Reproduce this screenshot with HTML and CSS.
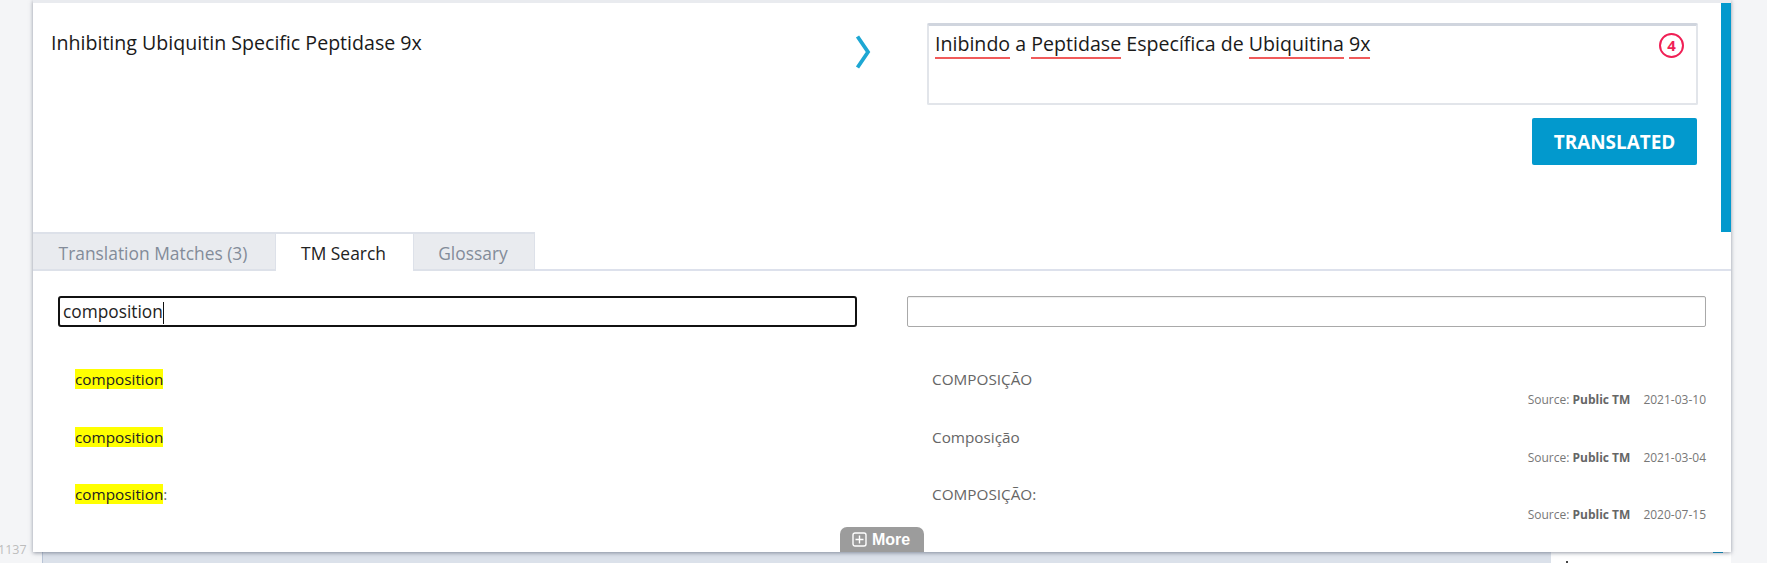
FILE: index.html
```html
<!DOCTYPE html>
<html lang="en">
<head>
<meta charset="utf-8">
<title>TM Search</title>
<link rel="stylesheet" href="styles.css">
</head>
<body>
<span class="line-no">1137</span>
<main class="card">
  <section class="segment">
    <div class="source">Inhibiting Ubiquitin Specific Peptidase 9x</div>
    <div class="arrow">
      <svg width="16" height="34" viewBox="0 0 16 34"><path d="M2.5 1.5 L13 17 L2.5 32.5" fill="none" stroke="#1da7d3" stroke-width="3.8"/></svg>
    </div>
    <div class="target">
      <div class="target-box">
        <span class="sp">Inibindo</span> a <span class="sp">Peptidase</span> Específica de <span class="sp">Ubiquitina</span> <span class="sp">9x</span>
        <span class="badge">4</span>
      </div>
      <div class="actions"><button class="btn">TRANSLATED</button></div>
    </div>
  </section>
  <nav class="tabs">
    <div class="tab tab-1">Translation Matches (3)</div>
    <div class="tab tab-active">TM Search</div>
    <div class="tab tab-3">Glossary</div>
  </nav>
  <section class="search">
    <div class="field field-focus">composition<i class="caret"></i></div>
    <div class="field"></div>
  </section>
  <section class="results">
    <div class="row">
      <div class="src"><mark>composition</mark></div>
      <div class="trg">COMPOSIÇÃO</div>
      <div class="meta">Source: <b>Public TM</b><span class="date">2021-03-10</span></div>
    </div>
    <div class="row">
      <div class="src"><mark>composition</mark></div>
      <div class="trg">Composição</div>
      <div class="meta">Source: <b>Public TM</b><span class="date">2021-03-04</span></div>
    </div>
    <div class="row">
      <div class="src"><mark>composition</mark>:</div>
      <div class="trg">COMPOSIÇÃO:</div>
      <div class="meta">Source: <b>Public TM</b><span class="date">2020-07-15</span></div>
    </div>
  </section>
  <button class="more">
    <svg width="15" height="15" viewBox="0 0 15 15"><rect x="1" y="1" width="13" height="13" rx="2" fill="none" stroke="#fff" stroke-width="1.4"/><path d="M7.5 3.5v8M3.5 7.5h8" stroke="#fff" stroke-width="1.4"/></svg>
    More
  </button>
</main>
<div class="below">
  <div class="next-card"><i class="next-tick"></i><i class="next-dot"></i></div>
</div>
</body>
</html>
```
FILE: styles.css
```css
* { box-sizing: border-box; }
html, body { margin: 0; height: 563px; overflow: hidden; }
body {
  position: relative;
  background: #f4f5f7;
  font-family: "Open Sans", "Noto Sans", sans-serif;
  color: #222;
}
.line-no {
  position: absolute;
  left: -2px;
  top: 541px;
  font-size: 12.5px;
  color: #bdbdbd;
}
.card {
  position: relative;
  z-index: 1;
  width: 1698px;
  height: 552px;
  margin-left: 33px;
  border-top: 3px solid #e9ebef;
  background: #fff;
  box-shadow: 0 1px 4px rgba(60, 70, 90, .55);
}
.segment {
  display: flex;
  height: 229px;
  border-right: 10px solid #0299cd;
}
.source {
  width: 822px;
  padding: 27px 0 0 18px;
  font-size: 19.6px;
  line-height: 26px;
  color: #1a1a1a;
}
.arrow { width: 73px; padding-top: 32px; }
.target { width: 771px; margin-left: -1px; padding-top: 20px; }
.target-box {
  position: relative;
  height: 82px;
  padding: 5px 6px;
  border: 2px solid #e2e5ea;
  border-top: 3px solid #d0d5de;
  border-radius: 2px;
  font-size: 19.6px;
  line-height: 26px;
  color: #1a1a1a;
}
.sp { border-bottom: 2px solid #f05a5a; padding-bottom: 0; }
.badge {
  position: absolute;
  right: 12px;
  top: 7px;
  width: 25px;
  height: 25px;
  border: 2.4px solid #f01f55;
  border-radius: 50%;
  color: #f01f55;
  font-size: 15px;
  font-weight: 700;
  line-height: 20px;
  text-align: center;
}
.actions { display: flex; justify-content: flex-end; padding: 13px 1px 0 0; }
.btn {
  width: 165px;
  height: 47px;
  border: 0;
  border-radius: 2px;
  background: #0299cd;
  color: #fff;
  font: 700 18.9px "Open Sans", sans-serif;
}
.tabs {
  display: flex;
  height: 39px;
  border-bottom: 2px solid #dde1ec;
}
.tab {
  height: 39px;
  padding: 7px 2px 0 0;
  border-top: 2px solid #dde1e9;
  border-right: 1px solid #dde1e9;
  border-bottom: 2px solid #dde1e9;
  background: #e9ebef;
  color: #838b99;
  font-size: 17.4px;
  line-height: 24px;
  text-align: center;
}
.tab-1 { width: 243px; }
.tab-active {
  width: 138px;
  background: #fff;
  border-bottom: 0;
  color: #222;
}
.tab-3 { width: 121px; }
.search {
  display: flex;
  gap: 50px;
  align-items: flex-start;
  padding: 25px 0 0 25px;
}
.field {
  width: 799px;
  height: 31px;
  border: 1px solid #a9a9a9;
  border-radius: 2px;
  box-shadow: inset 0 1px 1px #eee;
  font-size: 17.3px;
  line-height: 27px;
  padding-left: 4px;
  color: #222;
}
.field-focus {
  height: 31px;
  border: 2px solid #111;
  border-radius: 3px;
  box-shadow: none;
  line-height: 27px;
  padding-left: 3px;
}
.caret {
  display: inline-block;
  width: 1px;
  height: 22px;
  background: #111;
  vertical-align: middle;
}
.results { padding-top: 41px; }
.row {
  display: grid;
  grid-template-columns: 857px 1fr;
  height: 57.5px;
  padding-left: 42px;
  padding-right: 25px;
  font-size: 15.3px;
  line-height: 22px;
  color: #666;
}
.src { height: 22px; }
mark { background: #ffff00; color: #222; }
.trg { padding-left: 0; height: 22px; }
.meta {
  grid-column: 1 / 3;
  margin-top: -16px;
  text-align: right;
  font-size: 12px;
  line-height: 17px;
  color: #777;
}
.meta b { color: #666; }
.date { margin-left: 13px; }
.more {
  position: absolute;
  left: 807px;
  bottom: 0;
  display: flex;
  align-items: center;
  gap: 5px;
  width: 84px;
  height: 25px;
  padding: 0 0 0 12px;
  border: 0;
  border-radius: 7px 7px 0 0;
  background: #9c9c9c;
  color: #fff;
  font: 700 16px "Liberation Sans", sans-serif;
}
.below {
  position: relative;
  height: 11px;
  margin-left: 42px;
  width: 1689px;
  background: #dbe1ea;
  border-left: 1px solid #b8c4d6;
  overflow: hidden;
}
.next-card {
  position: absolute;
  right: 0;
  top: 0;
  width: 180px;
  height: 11px;
  background: #fff;
}
.next-tick {
  position: absolute;
  right: 8px;
  top: 0;
  width: 10px;
  height: 1px;
  background: #0299cd;
}
.next-dot {
  position: absolute;
  left: 15px;
  top: 9px;
  width: 2px;
  height: 2px;
  background: #444;
}
```
